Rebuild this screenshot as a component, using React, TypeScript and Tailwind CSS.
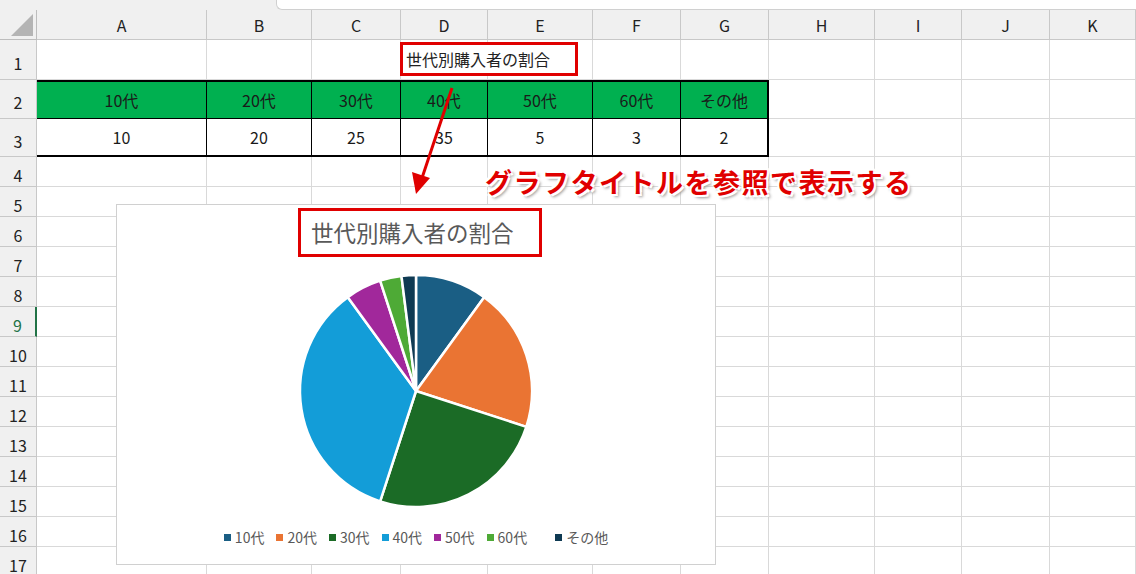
const cols = ['A', 'B', 'C', 'D', 'E', 'F', 'G', 'H', 'I', 'J', 'K']
const widths = [170, 105, 89, 87, 105, 88, 88, 106, 87, 88, 86]
const rowHeights = [40, 39, 38, 30, 30, 30, 30, 30, 30, 30, 30, 30, 30, 30, 30, 30, 30]
const heads = ['10代', '20代', '30代', '40代', '50代', '60代', 'その他']
const values = [10, 20, 25, 35, 5, 3, 2]
const colors = ['#1a5e84', '#ea7433', '#1b6b26', '#139dd8', '#a1289b', '#4eaa36', '#0f3a53']

const font = { fontFamily: '"Noto Sans CJK JP", "Liberation Sans", sans-serif' }

function Pie() {
  const total = values.reduce((a, b) => a + b, 0)
  const cx = 130, cy = 130, r = 116
  let acc = 0
  return (
    <svg width="260" height="260" viewBox="0 0 260 260">
      {values.map((v, i) => {
        const a0 = (acc / total) * Math.PI * 2
        acc += v
        const a1 = (acc / total) * Math.PI * 2
        const x0 = cx + r * Math.sin(a0), y0 = cy - r * Math.cos(a0)
        const x1 = cx + r * Math.sin(a1), y1 = cy - r * Math.cos(a1)
        const large = a1 - a0 > Math.PI ? 1 : 0
        return (
          <path key={i} d={`M${cx},${cy} L${x0},${y0} A${r},${r} 0 ${large} 1 ${x1},${y1} Z`} fill={colors[i]} stroke="#fff" strokeWidth="2.5" strokeLinejoin="round" />
        )
      })}
    </svg>
  )
}

export default function App() {
  const cell = 'border-r border-b border-[#d9d9d9] flex items-center justify-center text-[16px] text-[#222]'
  return (
    <div className="relative w-[1136px] h-[574px] overflow-hidden bg-white" style={font}>
      <div className="h-[10px] bg-[#f0f0f0] flex">
        <div className="ml-[276px] flex-1 bg-white rounded-bl-md border-l border-b border-[#d0d0d0]" />
      </div>
      <div
        className="grid"
        style={{ gridTemplateColumns: `37px ${widths.map((w) => w + 'px').join(' ')}` }}
      >
        <div className="h-[30px] bg-[#f0f0f0] border-r border-b border-[#bdbdbd] relative">
          <div className="absolute right-[3px] bottom-[3px] w-0 h-0 border-l-[22px] border-l-transparent border-b-[22px] border-b-[#b4b4b4]" />
        </div>
        {cols.map((c) => (
          <div key={c} className="h-[30px] bg-[#f0f0f0] border-r border-b border-[#c8c8c8] flex items-center justify-center text-[16px] text-[#222]">
            {c}
          </div>
        ))}
        {rowHeights.map((h, r) => (
          <>
            <div key={'n' + r} style={{ height: h }} className={`bg-[#f0f0f0] border-r border-b border-[#c8c8c8] flex items-center justify-center text-[16px] pt-[6px] leading-none ${r === 8 ? 'text-[#217346] border-r-2 border-r-[#217346]' : 'text-[#222]'}`}>
              {r + 1}
            </div>
            {cols.map((_, c) => {
              if (r === 1 && c < 7)
                return (
                  <div key={c} className={`bg-[#00b050] flex items-center justify-center text-[16px] text-[#1a1a1a] border-black border-t-2 border-b-[1.5px] ${c === 6 ? 'border-r-2' : 'border-r'}`}>
                    {heads[c]}
                  </div>
                )
              if (r === 2 && c < 7)
                return (
                  <div key={c} className={`flex items-center justify-center text-[16px] text-[#1a1a1a] border-black border-b-2 ${c === 6 ? 'border-r-2' : 'border-r'}`}>
                    {values[c]}
                  </div>
                )
              return <div key={c} className={cell} />
            })}
          </>
        ))}
      </div>

      {/* A1 title with red box */}
      <div className="absolute left-[400px] top-[42px] w-[178px] h-[34px] border-[3px] border-[#e00000] flex items-center pl-[3px] text-[16px] text-[#222] whitespace-nowrap bg-white">
        世代別購入者の割合
      </div>

      {/* arrow */}
      <svg className="absolute left-0 top-0" width="1136" height="574">
        <line x1="452" y1="88" x2="422" y2="178" stroke="#e00000" strokeWidth="3" />
        <polygon points="416,194 412,172 430,178" fill="#e00000" />
      </svg>

      <div
        className="absolute left-[485px] top-[162px] text-[27px] font-bold text-[#e00000] whitespace-nowrap tracking-[1.5px]"
        style={{ textShadow: '2px 2px 0 #fff, -2px -2px 0 #fff, 2px -2px 0 #fff, -2px 2px 0 #fff, 3px 3px 3px #999' }}
      >
        グラフタイトルを参照で表示する
      </div>

      {/* chart */}
      <div className="absolute left-[116px] top-[204px] w-[600px] h-[361px] bg-white border border-[#d0d0d0] flex flex-col items-center">
        <div className="mt-[3px] self-start ml-[181px] w-[244px] h-[49px] border-[3px] border-[#e00000] flex items-center pl-[10px] text-[22.5px] text-[#595959] whitespace-nowrap">
          世代別購入者の割合
        </div>
        <div className="mt-[4px]">
          <Pie />
        </div>
        <div className="mt-[6px] flex items-center text-[14px] text-[#595959]">
          {heads.map((h, i) => (
            <div key={h} className={`flex items-center gap-[4px] ${i === 6 ? 'ml-[28px]' : i ? 'ml-[12px]' : ''}`}>
              <span className="w-[7px] h-[7px]" style={{ background: colors[i] }} />
              {h}
            </div>
          ))}
        </div>
      </div>
    </div>
  )
}
